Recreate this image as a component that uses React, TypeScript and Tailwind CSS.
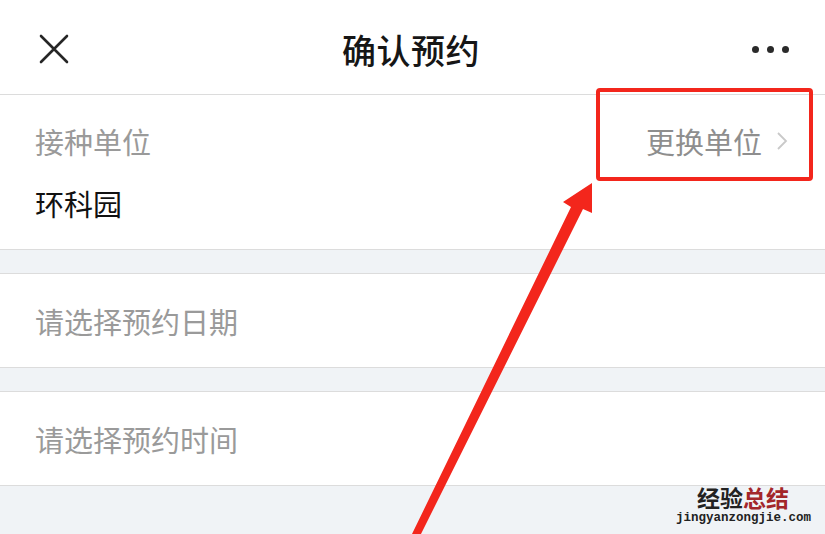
import React from 'react';

const cjk = { fontFamily: '"Noto Sans CJK SC", "Noto Sans", sans-serif' };

const App = () => {
  return (
    <div className="relative w-[825px] h-[534px] overflow-hidden bg-[#f0f3f6]" style={cjk}>
      {/* header */}
      <div className="h-[95px] bg-white border-b border-[#dcdcdc] flex items-center justify-between pl-[38px] pr-[36px] pt-[4px]">
        <svg width="32" height="32" viewBox="0 0 32 32">
          <path d="M3 3 L29 29 M29 3 L3 29" stroke="#262626" strokeWidth="2.6" strokeLinecap="round" />
        </svg>
        <div className="text-[34px] font-medium text-[#161616] tracking-[0.5px]">确认预约</div>
        <div className="flex items-center gap-[8px]">
          <span className="w-[7px] h-[7px] rounded-full bg-[#2a2a2a]" />
          <span className="w-[7px] h-[7px] rounded-full bg-[#2a2a2a]" />
          <span className="w-[7px] h-[7px] rounded-full bg-[#2a2a2a]" />
        </div>
      </div>

      {/* unit */}
      <div className="h-[155px] bg-white border-b border-[#dcdcdc] pl-[35px] pr-[37px] pt-[31px]">
        <div className="flex items-center justify-between h-[30px]">
          <span className="text-[29px] leading-[30px] text-[#9a9a9a]">接种单位</span>
          <div className="flex items-center gap-[14px]">
            <span className="text-[29px] leading-[30px] text-[#8e8e8e]">更换单位</span>
            <svg width="12" height="20" viewBox="0 0 12 20">
              <path d="M2 2 L10 10 L2 18" fill="none" stroke="#c9c9c9" strokeWidth="1.8" />
            </svg>
          </div>
        </div>
        <div className="mt-[32px] text-[29px] leading-[30px] text-[#111]">环科园</div>
      </div>

      <div className="h-[24px] border-b border-[#dcdcdc]" />

      <div className="h-[94px] bg-white border-b border-[#dcdcdc] pl-[35px] flex items-center">
        <span className="text-[29px] leading-[30px] text-[#9a9a9a]">请选择预约日期</span>
      </div>

      <div className="h-[24px] border-b border-[#dcdcdc]" />

      <div className="h-[94px] bg-white border-b border-[#dcdcdc] pl-[35px] flex items-center">
        <span className="text-[29px] leading-[30px] text-[#9a9a9a]">请选择预约时间</span>
      </div>

      {/* red highlight box */}
      <div className="absolute left-[596px] top-[88px] w-[217px] h-[93px] border-[4px] border-[#f3261c] rounded-[4px]" />

      {/* red arrow */}
      <svg className="absolute left-0 top-0" width="825" height="534" viewBox="0 0 825 534">
        <polygon
          points="412,534 571,207 563,202 592,183 592,213 583,209 421,534"
          fill="#f3261c"
        />
      </svg>

      {/* watermark */}
      <div className="absolute right-[14px] top-[484px] flex flex-col items-end">
        <div className="text-[23px] leading-[27px] font-bold pr-[22px]">
          <span className="text-[#222]">经验</span>
          <span className="text-[#a3262a]">总结</span>
        </div>
        <div
          className="text-[12.5px] leading-[15px] font-bold text-[#222]"
          style={{ fontFamily: '"Liberation Mono", monospace' }}
        >
          jingyanzongjie.com
        </div>
      </div>
    </div>
  );
};

export default App;
